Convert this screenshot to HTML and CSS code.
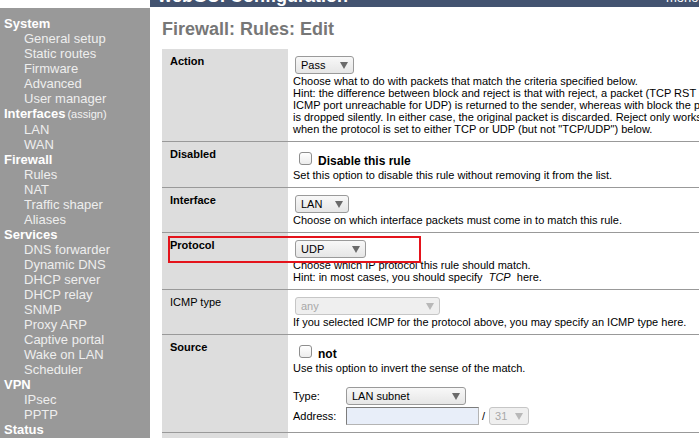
FILE: index.html
```html
<!DOCTYPE html>
<html>
<head>
<meta charset="utf-8">
<title>Firewall: Rules: Edit</title>
<link rel="stylesheet" href="styles.css">
</head>
<body>
<div class="page">
  <div class="corner"></div>
  <div class="header"><span class="hdr-title">webGUI Configuration</span><span class="hdr-host">monowall.local</span></div>
  <nav class="nav">
    <div class="nav-h">System</div>
    <a class="nav-i">General setup</a>
    <a class="nav-i">Static routes</a>
    <a class="nav-i">Firmware</a>
    <a class="nav-i">Advanced</a>
    <a class="nav-i">User manager</a>
    <div class="nav-h">Interfaces<span class="nav-sub">(assign)</span></div>
    <a class="nav-i">LAN</a>
    <a class="nav-i">WAN</a>
    <div class="nav-h">Firewall</div>
    <a class="nav-i">Rules</a>
    <a class="nav-i">NAT</a>
    <a class="nav-i">Traffic shaper</a>
    <a class="nav-i">Aliases</a>
    <div class="nav-h">Services</div>
    <a class="nav-i">DNS forwarder</a>
    <a class="nav-i">Dynamic DNS</a>
    <a class="nav-i">DHCP server</a>
    <a class="nav-i">DHCP relay</a>
    <a class="nav-i">SNMP</a>
    <a class="nav-i">Proxy ARP</a>
    <a class="nav-i">Captive portal</a>
    <a class="nav-i">Wake on LAN</a>
    <a class="nav-i">Scheduler</a>
    <div class="nav-h">VPN</div>
    <a class="nav-i">IPsec</a>
    <a class="nav-i">PPTP</a>
    <div class="nav-h">Status</div>
  </nav>
  <main class="main">
    <h1 class="title">Firewall: Rules: Edit</h1>
    <div class="form">
      <div class="row">
        <div class="lbl req">Action</div>
        <div class="cell">
          <div class="ctl"><span class="sel w-pass">Pass<svg class="arr" width="8" height="7" viewBox="0 0 8 7"><polygon points="0,0 8,0 4,7"/></svg></span></div>
          <div class="desc">Choose what to do with packets that match the criteria specified below.<br>Hint: the difference between block and reject is that with reject, a packet (TCP RST or<br>ICMP port unreachable for UDP) is returned to the sender, whereas with block the packet<br>is dropped silently. In either case, the original packet is discarded. Reject only works<br>when the protocol is set to either TCP or UDP (but not "TCP/UDP") below.</div>
        </div>
      </div>
      <div class="row">
        <div class="lbl req">Disabled</div>
        <div class="cell">
          <div class="checkline"><span class="cb"></span><span class="cb-text">Disable this rule</span></div>
          <div class="desc">Set this option to disable this rule without removing it from the list.</div>
        </div>
      </div>
      <div class="row">
        <div class="lbl req">Interface</div>
        <div class="cell">
          <div class="ctl"><span class="sel w-lan">LAN<svg class="arr" width="8" height="7" viewBox="0 0 8 7"><polygon points="0,0 8,0 4,7"/></svg></span></div>
          <div class="desc">Choose on which interface packets must come in to match this rule.</div>
        </div>
      </div>
      <div class="row">
        <div class="lbl req">Protocol</div>
        <div class="cell">
          <div class="ctl"><span class="sel w-udp">UDP<svg class="arr" width="8" height="7" viewBox="0 0 8 7"><polygon points="0,0 8,0 4,7"/></svg></span></div>
          <div class="desc">Choose which IP protocol this rule should match.<br>Hint: in most cases, you should specify&nbsp; <em>TCP</em>&nbsp; here.</div>
        </div>
      </div>
      <div class="row">
        <div class="lbl">ICMP type</div>
        <div class="cell">
          <div class="ctl"><span class="sel dis w-any">any<svg class="arr" width="8" height="7" viewBox="0 0 8 7"><polygon points="0,0 8,0 4,7"/></svg></span></div>
          <div class="desc">If you selected ICMP for the protocol above, you may specify an ICMP type here.</div>
        </div>
      </div>
      <div class="row">
        <div class="lbl req">Source</div>
        <div class="cell">
          <div class="checkline"><span class="cb"></span><span class="cb-text">not</span></div>
          <div class="desc">Use this option to invert the sense of the match.</div>
          <div class="addr">
            <div class="addr-l">Type:</div>
            <div class="addr-c"><span class="sel flat w-type">LAN subnet<svg class="arr" width="8" height="7" viewBox="0 0 8 7"><polygon points="0,0 8,0 4,7"/></svg></span></div>
            <div class="addr-l">Address:</div>
            <div class="addr-c"><span class="inp"></span><span class="slash">/</span><span class="sel flat dis w-mask">31<svg class="arr" width="8" height="7" viewBox="0 0 8 7"><polygon points="0,0 8,0 4,7"/></svg></span></div>
          </div>
        </div>
      </div>
      <div class="row">
        <div class="lbl req">Destination</div>
        <div class="cell">
          <div class="checkline"><span class="cb"></span><span class="cb-text">not</span></div>
        </div>
      </div>
    </div>
    <div class="highlight"></div>
  </main>
</div>
</body>
</html>
```
FILE: styles.css
```css
html, body {
  margin: 0;
  padding: 0;
  overflow: hidden;
  background: #fff;
}
body {
  font-family: "Liberation Sans", Arial, sans-serif;
  color: #000;
}
.page {
  display: grid;
  grid-template-columns: 150px 700px;
  grid-template-rows: 7px 1fr;
  row-gap: 1px;
  min-height: 438px;
}
.header {
  background: #435370;
  overflow: hidden;
  white-space: nowrap;
  display: flex;
  align-items: flex-start;
}
.hdr-title {
  font-weight: bold;
  font-size: 18px;
  line-height: 18px;
  margin-top: -13px;
  padding-left: 8px;
  color: #fff;
}
.hdr-host {
  font-size: 13px;
  line-height: 13px;
  margin-top: -9px;
  margin-left: 318px;
  color: #fff;
}
.nav {
  background: #999;
  padding-top: 8px;
}
.nav-h {
  font-weight: bold;
  font-size: 13px;
  line-height: 15px;
  color: #fff;
  padding-left: 4px;
}
.nav-i {
  display: block;
  font-size: 13px;
  line-height: 15px;
  color: #eee;
  padding-left: 24px;
  text-decoration: none;
}
.nav-sub {
  font-weight: normal;
  font-size: 11px;
  margin-left: 2px;
  color: #f2f2f2;
}
.main {
  position: relative;
  padding: 10px 0 0 12px;
}
.title {
  margin: 0;
  font-size: 18px;
  line-height: 22px;
  font-weight: bold;
  color: #777;
}
.form {
  margin-top: 9px;
  width: 620px;
  font-size: 11px;
  line-height: 12px;
}
.row {
  display: grid;
  grid-template-columns: 126px 1fr;
  border-bottom: 1px solid #999;
}
.lbl {
  background: #ddd;
  padding: 6px 8px;
}
.lbl.req {
  font-weight: bold;
}
.cell {
  padding: 6px 5px;
  white-space: nowrap;
}
.ctl {
  height: 20px;
}
.sel {
  display: inline-flex;
  align-items: center;
  justify-content: space-between;
  box-sizing: border-box;
  height: 18px;
  margin: 1px 0 0 2px;
  padding: 0 5px;
  border: 1px solid #9a9a9a;
  border-radius: 3px;
  background: linear-gradient(#f8f8f8, #e6e6e6);
  font-size: 11px;
  line-height: 16px;
  vertical-align: top;
}
.sel.flat {
  margin-left: 0;
}
.arr {
  fill: #6a6a6a;
}
.sel.dis {
  color: #a8a8a8;
  border-color: #c6c6c6;
  background: #efefef;
}
.sel.dis .arr {
  fill: #b8b8b8;
}
.w-pass { width: 59px; }
.w-lan { width: 54px; }
.w-udp { width: 71px; }
.w-any { width: 145px; }
.w-type { width: 120px; }
.w-mask { width: 40px; }
.checkline {
  height: 21px;
  display: flex;
  align-items: flex-end;
}
.cb {
  width: 13px;
  height: 13px;
  box-sizing: border-box;
  border: 1px solid #8e8e8e;
  border-radius: 3px;
  background: linear-gradient(#fff, #ececec);
  margin: 0 6px 4px 6px;
}
.cb-text {
  font-weight: bold;
  font-size: 12px;
  line-height: 14px;
  margin-bottom: 1px;
}
.addr {
  margin-top: 12px;
  display: grid;
  grid-template-columns: 53px auto;
  grid-auto-rows: 20px;
  line-height: 20px;
}
.addr-c {
  display: flex;
  align-items: flex-start;
}
.inp {
  display: block;
  width: 133px;
  height: 18px;
  box-sizing: border-box;
  margin-top: 1px;
  border: 1px solid #b4b4b4;
  border-top-color: #7c7c7c;
  border-left-color: #7c7c7c;
  background: #e8eef9;
}
.slash {
  margin: 0 4px 0 3px;
}
.highlight {
  position: absolute;
  left: 18px;
  top: 228px;
  width: 253px;
  height: 27px;
  box-sizing: border-box;
  border: 2px solid #e4131b;
}
```
